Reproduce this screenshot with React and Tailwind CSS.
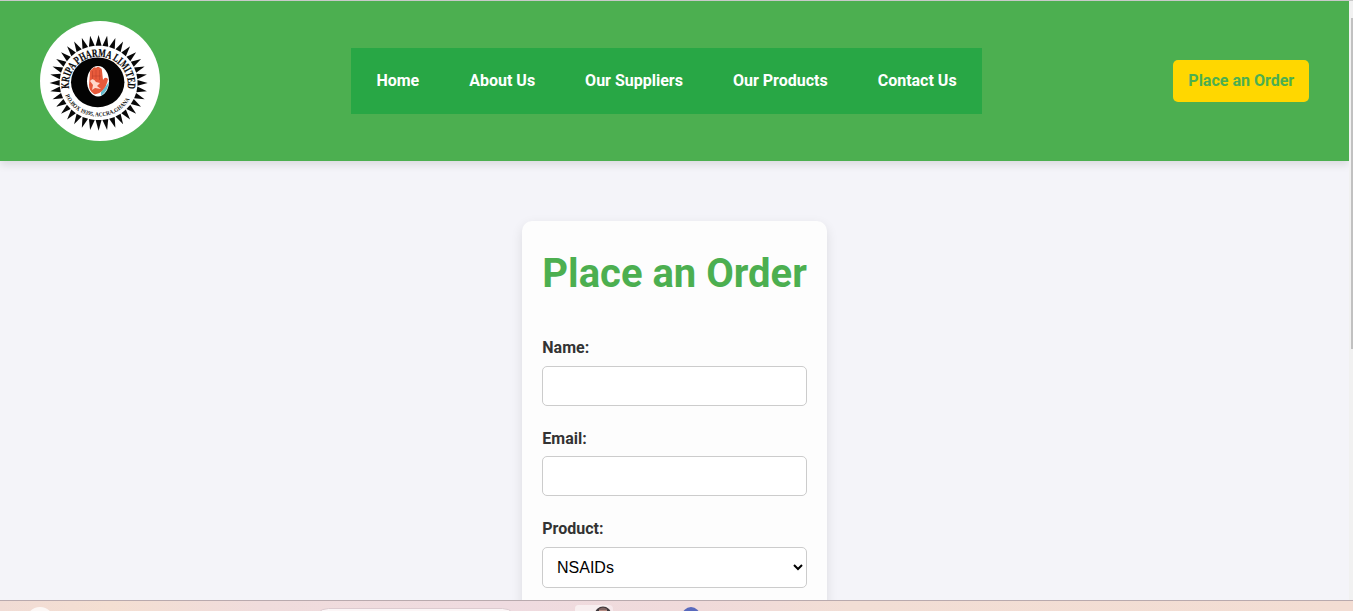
const NAV = ['Home', 'About Us', 'Our Suppliers', 'Our Products', 'Contact Us'];

// Sun rays around the emblem, one narrow triangle each
const RAYS = Array.from({ length: 36 }, (_, i) => {
  const a = (i * 2 * Math.PI) / 36 - Math.PI / 2;
  const p = (t, rx, ry) =>
    `${(58.6 + rx * Math.cos(t)).toFixed(2)},${(61.9 + ry * Math.sin(t)).toFixed(2)}`;
  return `${p(a - 0.076, 39, 37.3)} ${p(a, 49, 47.8)} ${p(a + 0.076, 39, 37.3)}`;
});

function Logo() {
  return (
    <svg className="size-[120px] shrink-0 rounded-full bg-white" viewBox="0 0 120 120" role="img" aria-label="Kripa Pharma Limited">
      <defs>
        <path id="arcTop" d="M29.2 67.5 A29.5 27.6 0 1 1 86.4 72" />
        <path id="arcBottom" d="M25.4 74 A34.4 29.7 0 0 0 91.9 72.5" />
      </defs>
      {RAYS.map((points) => (
        <polygon key={points} points={points} fill="#080808" />
      ))}
      <ellipse cx="57.7" cy="61.3" rx="26.7" ry="24.9" fill="#030303" />
      <ellipse cx="58" cy="60.3" rx="11" ry="15.2" fill="#fff" />
      <path d="M61 71 L69 61 Q68 70 61 75Z" fill="#65bdd0" />
      <path
        d="M50 51 Q50 48 52 48.5 L53 47 Q55 45.5 56 47 L57 46 Q59 45 60 47 Q62 47 62 50 L63 59 Q65 55 68 58 Q67 65 62 70 Q58 74 54 73 Q49 70 49 64Z"
        fill="#e75a3b"
      />
      <path d="M50 60 Q53 56 56 61 L60 62 L57 65 L61 68 L55 67 L52 69 L53 64Z" fill="#ffd9ca" />
      <path d="M52.5 50 V58 M56 49 V58 M59.5 49 V59 M52 55 H61" stroke="#b93e2b" strokeWidth="0.5" fill="none" />
      <text fill="#050505" stroke="#050505" strokeWidth="0.2" className="font-['Liberation_Serif',serif] text-[11.3px] font-bold">
        <textPath href="#arcTop" textLength="98" lengthAdjust="spacingAndGlyphs">KRIPA PHARMA LIMITED</textPath>
      </text>
      <text fill="#111" className="font-['Liberation_Serif',serif] text-[6px] font-bold">
        <textPath href="#arcBottom" textLength="79" lengthAdjust="spacingAndGlyphs">P.O.BOX 19395, ACCRA,GHANA</textPath>
      </text>
    </svg>
  );
}

function Header() {
  return (
    <header className="relative z-10 flex h-40 items-center justify-between bg-[#4caf50] px-10 shadow-[0_4px_8px_rgba(0,0,0,0.1)]">
      <Logo />
      <nav className="flex h-[66px] items-center bg-[#28a745]">
        {NAV.map((label) => (
          <a key={label} href="#" className="px-[25px] font-bold text-white">
            {label}
          </a>
        ))}
      </nav>
      <a href="#" className="flex h-[42px] w-[136px] items-center justify-center rounded-[5px] bg-[#ffd700] pl-[0.5px] font-bold text-[#4caf50]">
        Place an Order
      </a>
    </header>
  );
}

function OrderForm() {
  return (
    <form className="h-[620px] w-[305px] rounded-[10px] bg-[#fdfdfd] px-5 pt-[29px] shadow-[0_4px_12px_rgba(0,0,0,0.1)]">
      <h1 className="mb-[41px] pl-[0.3px] text-[40px] leading-12 font-bold whitespace-nowrap text-[#4caf50]">Place an Order</h1>
      <label htmlFor="name" className="block h-[27px] pl-[0.3px] leading-[18px] font-bold text-[#333]">Name:</label>
      <input id="name" className="mb-6 block h-10 w-full rounded-[5px] border border-[#ccc] bg-white px-2.5" />
      <label htmlFor="email" className="block h-[26px] pl-[0.3px] leading-[18px] font-bold text-[#333]">Email:</label>
      <input id="email" className="mb-6 block h-10 w-full rounded-[5px] border border-[#ccc] bg-white px-2.5" />
      <label htmlFor="product" className="block h-[27px] pl-[0.3px] leading-[18px] font-bold text-[#333]">Product:</label>
      <select id="product" className="block h-[41px] w-full rounded-[5px] border border-[#ccc] bg-white px-2.5 font-['Liberation_Sans',Arial,sans-serif] text-base text-black">
        <option>NSAIDs</option>
      </select>
    </form>
  );
}

function Taskbar() {
  return (
    <footer className="h-[11px] shrink-0 overflow-hidden border-t border-[#b9aaae] bg-[linear-gradient(90deg,#f1dcd5_0,#f4dfd2_110px,#f0dcdc_260px,#efdbe0_500px,#f0dada_700px,#f2ded5_850px,#f3ddd3_100%)]">
      <svg className="block h-2.5 w-full" viewBox="0 0 1353 10">
        <circle cx="40" cy="20" r="14" fill="#fcf7f5" />
        <rect x="312.5" y="7.5" width="206" height="32" rx="16" fill="#fcf6f7" stroke="#dccbd0" />
        <rect x="575" y="4" width="38" height="30" rx="4" fill="#f6e8eb" />
        <rect x="575" y="4" width="34" height="30" rx="4" fill="#f8eff0" />
        <ellipse cx="603" cy="13" rx="8" ry="7.5" fill="#40383b" />
        <path d="M599 10 V8 Q603 5.5 607 8 V10" fill="#b98e86" />
        <path d="M598.5 8 H607.5" stroke="#4a3c40" strokeWidth="1" />
        <circle cx="691" cy="15" r="9" fill="#5969bd" />
      </svg>
    </footer>
  );
}

export default function App() {
  return (
    <div className="flex h-[611px] w-full flex-col overflow-hidden bg-[#f4f4f9] font-[Roboto,sans-serif] text-base">
      <div className="h-px shrink-0 bg-[#c9c9c9]" />
      <div className="flex min-h-0 flex-1 overflow-hidden">
        <div className="min-w-0 flex-1 overflow-hidden">
          <Header />
          <main className="flex justify-center pt-[60px]">
            <OrderForm />
          </main>
        </div>
        <div className="w-1 shrink-0 bg-[#f1f1f1] pt-[17px] pl-0.5">
          <div className="h-[331px] bg-[#c1c1c1]" />
        </div>
      </div>
      <Taskbar />
    </div>
  );
}
